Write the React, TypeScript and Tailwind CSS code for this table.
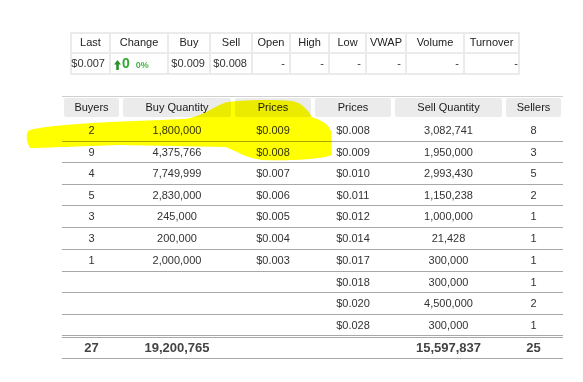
import React from "react";

const topHead = ["Last", "Change", "Buy", "Sell", "Open", "High", "Low", "VWAP", "Volume", "Turnover"];

const rows: { h: string; d: string[] }[] = [
  { h: "h-[22px]", d: ["2", "1,800,000", "$0.009", "$0.008", "3,082,741", "8"] },
  { h: "h-[21px]", d: ["9", "4,375,766", "$0.008", "$0.009", "1,950,000", "3"] },
  { h: "h-[22px]", d: ["4", "7,749,999", "$0.007", "$0.010", "2,993,430", "5"] },
  { h: "h-[21px]", d: ["5", "2,830,000", "$0.006", "$0.011", "1,150,238", "2"] },
  { h: "h-[22px]", d: ["3", "245,000", "$0.005", "$0.012", "1,000,000", "1"] },
  { h: "h-[22px]", d: ["3", "200,000", "$0.004", "$0.014", "21,428", "1"] },
  { h: "h-[22px]", d: ["1", "2,000,000", "$0.003", "$0.017", "300,000", "1"] },
  { h: "h-[21px]", d: ["", "", "", "$0.018", "300,000", "1"] },
  { h: "h-[22px]", d: ["", "", "", "$0.020", "4,500,000", "2"] },
];
const lastRow = ["", "", "", "$0.028", "300,000", "1"];
const bottomHead = ["Buyers", "Buy Quantity", "Prices", "Prices", "Sell Quantity", "Sellers"];
const cols = "grid grid-cols-[59px_112px_80px_80px_111px_59px]";

function UpArrow() {
  return (
    <svg width="7" height="10" viewBox="0 0 7 10" className="mr-[1px]">
      <path d="M3.5 0 L7 4.5 L4.8 4.5 L4.8 10 L2.2 10 L2.2 4.5 L0 4.5 Z" fill="#2f8f2f" />
    </svg>
  );
}

export default function App() {
  return (
    <div className="relative w-[583px] h-[382px] bg-white overflow-hidden font-['Liberation_Sans',Arial,sans-serif] text-[11px]">
      {/* Top summary table */}
      <div className="ml-[70px] mt-[32px] w-fit bg-[#ebebeb] p-[2px] grid grid-cols-[37px_56px_40px_40px_36px_37px_35px_38px_56px_53px] grid-rows-[18px_19px] gap-[2px]">
        {topHead.map((t) => (
          <div key={t} className="bg-white flex items-center justify-center text-[#222] pb-[2px]">
            {t}
          </div>
        ))}
        <div className="bg-white flex items-center justify-end pr-[4px] text-[#333]">$0.007</div>
        <div className="bg-white flex items-end pl-[3px] pb-[3px]">
          <UpArrow />
          <span className="text-[14px] font-bold leading-[14px] text-[#2ea82e]">0</span>
          <span className="ml-[6px] text-[9px] font-bold leading-[10px] text-[#47b547]">0%</span>
        </div>
        <div className="bg-white flex items-center justify-end pr-[4px] text-[#333]">$0.009</div>
        <div className="bg-white flex items-center justify-end pr-[4px] text-[#333]">$0.008</div>
        <div className="bg-white flex items-center justify-end pr-[4px] text-[#333]">-</div>
        <div className="bg-white flex items-center justify-end pr-[4px] text-[#333]">-</div>
        <div className="bg-white flex items-center justify-end pr-[4px] text-[#333]">-</div>
        <div className="bg-white flex items-center justify-end pr-[4px] text-[#333]">-</div>
        <div className="bg-white flex items-center justify-end pr-[4px] text-[#333]">-</div>
        <div className="bg-white flex items-center justify-end pr-0 text-[#333]">-</div>
      </div>

      {/* Order book table */}
      <div className="ml-[62px] mt-[21px] w-[501px]">
        <div className={`${cols} h-[24px] border-t border-[#cfcfcf]`}>
          {bottomHead.map((t, i) => (
            <div key={i} className="mx-[2px] mt-[1px] h-[19px] rounded-[2px] bg-[#ebebeb] flex items-center justify-center text-[#1a1a1a]">
              {t}
            </div>
          ))}
        </div>
        {rows.map((r, i) => (
          <div key={i} className={`${cols} ${r.h} border-b border-[#a8a8a8] text-[#333]`}>
            {r.d.map((c, j) => (
              <div key={j} className="flex items-center justify-center">
                {c}
              </div>
            ))}
          </div>
        ))}
        <div className={`${cols} h-[23px] border-b-[3px] border-double border-[#a8a8a8] text-[#333]`}>
          {lastRow.map((c, j) => (
            <div key={j} className="flex items-center justify-center">
              {c}
            </div>
          ))}
        </div>
        <div className={`${cols} h-[21px] border-b border-[#a8a8a8] text-[13px] font-bold text-[#444]`}>
          <div className="flex items-center justify-center">27</div>
          <div className="flex items-center justify-center">19,200,765</div>
          <div />
          <div />
          <div className="flex items-center justify-center">15,597,837</div>
          <div className="flex items-center justify-center">25</div>
        </div>
      </div>

      {/* Highlighter stroke */}
      <svg
        className="absolute inset-0 pointer-events-none mix-blend-multiply"
        width="583"
        height="382"
        viewBox="0 0 583 382"
      >
        <path
          d="M28 131 C36 127 70 124 110 122 L185 119 C200 117 212 108 224 103 C236 100 270 99 292 101 C302 103 308 110 312 117 C320 120 328 123 331 131 L332 155 C322 159 292 161 262 160 C246 158 236 151 226 147 L120 145 C80 146 45 148 30 148 C26 141 26 135 28 131 Z"
          fill="#ffff00"
        />
      </svg>
    </div>
  );
}
